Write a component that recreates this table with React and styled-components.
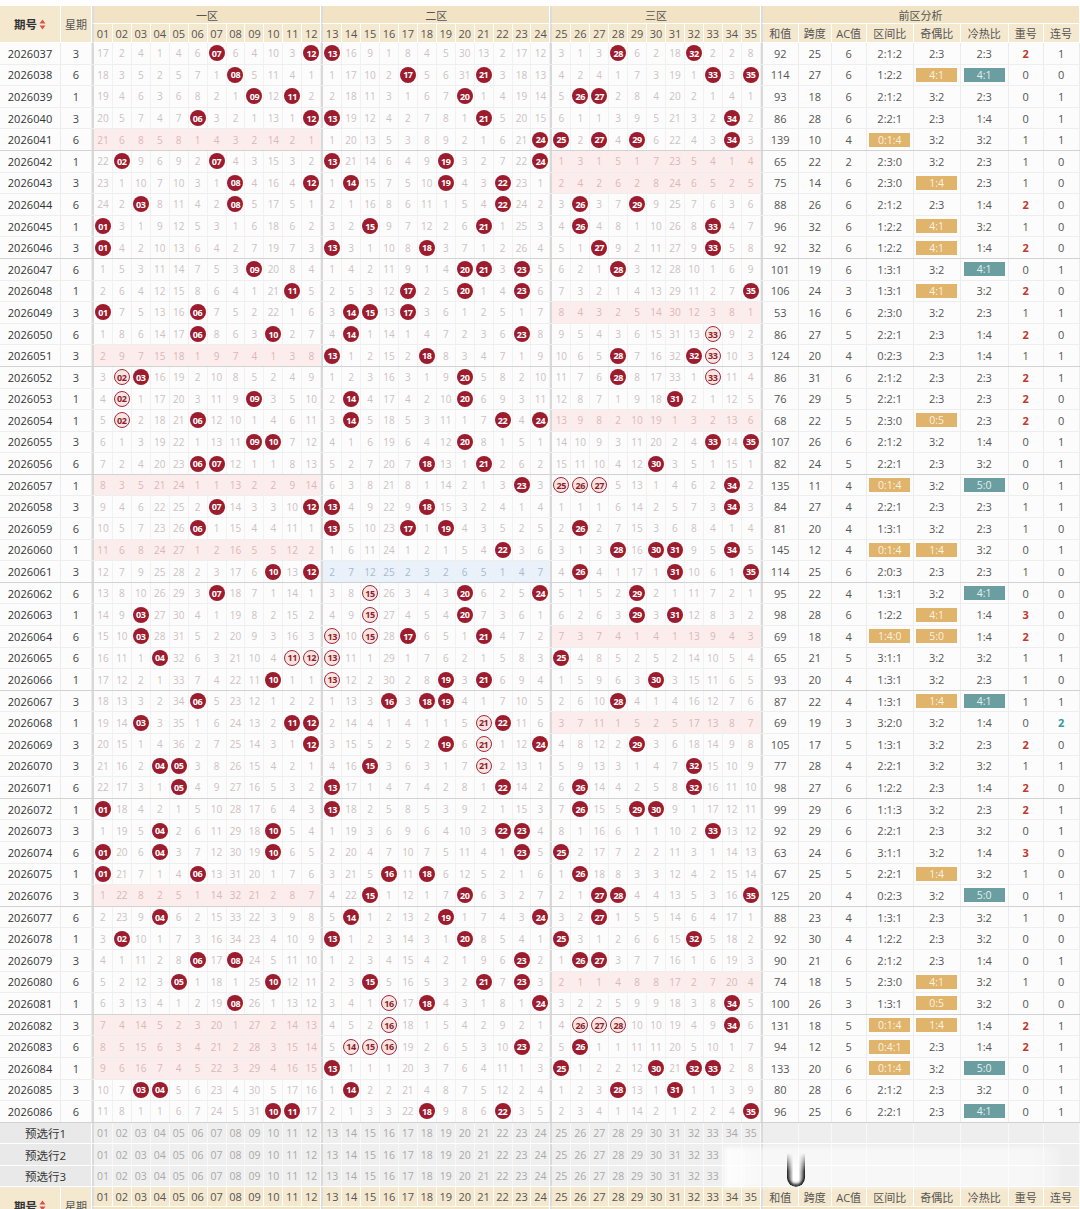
import React from 'react';
import styled, { createGlobalStyle, css } from 'styled-components';

const GlobalStyle = createGlobalStyle`
  *, *::before, *::after { box-sizing: border-box; }
  html, body { margin: 0; padding: 0; background: #fff; }
  body { font-family: "Open Sans", "Noto Sans CJK SC", sans-serif; }
`;

const COLS = `61px 31px 20.9px repeat(11, 18.95px) 20.9px repeat(11, 18.95px) 20.9px repeat(10, 18.95px) 38px 33px 35px 47px 47px 48px 35px 35.9px`;

const DRAWS = [
  ['2026037', 3, [7, 12, 13, 28, 32]],
  ['2026038', 6, [8, 17, 21, 33, 35]],
  ['2026039', 1, [9, 11, 20, 26, 27]],
  ['2026040', 3, [6, 12, 13, 21, 34]],
  ['2026041', 6, [24, 25, 27, 29, 34]],
  ['2026042', 1, [2, 7, 13, 19, 24]],
  ['2026043', 3, [8, 12, 14, 19, 22]],
  ['2026044', 6, [3, 8, 22, 26, 29]],
  ['2026045', 1, [1, 15, 21, 26, 33]],
  ['2026046', 3, [1, 13, 18, 27, 33]],
  ['2026047', 6, [9, 20, 21, 23, 28]],
  ['2026048', 1, [11, 17, 20, 23, 35]],
  ['2026049', 3, [1, 6, 14, 15, 17]],
  ['2026050', 6, [6, 10, 14, 23, 33]],
  ['2026051', 3, [13, 18, 28, 32, 33]],
  ['2026052', 3, [2, 3, 20, 28, 33]],
  ['2026053', 1, [2, 9, 14, 20, 31]],
  ['2026054', 1, [2, 6, 14, 22, 24]],
  ['2026055', 3, [9, 10, 20, 33, 35]],
  ['2026056', 6, [6, 7, 18, 21, 30]],
  ['2026057', 1, [23, 25, 26, 27, 34]],
  ['2026058', 3, [7, 12, 13, 18, 34]],
  ['2026059', 6, [6, 13, 17, 19, 26]],
  ['2026060', 1, [22, 28, 30, 31, 34]],
  ['2026061', 3, [10, 12, 26, 31, 35]],
  ['2026062', 6, [7, 15, 20, 24, 29]],
  ['2026063', 1, [3, 15, 20, 29, 31]],
  ['2026064', 6, [3, 13, 15, 17, 21]],
  ['2026065', 6, [4, 11, 12, 13, 25]],
  ['2026066', 1, [10, 13, 19, 21, 30]],
  ['2026067', 3, [6, 16, 18, 19, 28]],
  ['2026068', 1, [3, 11, 12, 21, 22]],
  ['2026069', 3, [12, 19, 21, 24, 29]],
  ['2026070', 3, [4, 5, 15, 21, 32]],
  ['2026071', 6, [5, 13, 22, 26, 32]],
  ['2026072', 1, [1, 13, 26, 29, 30]],
  ['2026073', 3, [4, 10, 22, 23, 33]],
  ['2026074', 6, [1, 4, 10, 23, 25]],
  ['2026075', 1, [1, 6, 16, 18, 26]],
  ['2026076', 3, [15, 20, 27, 28, 35]],
  ['2026077', 6, [4, 14, 19, 24, 27]],
  ['2026078', 1, [2, 13, 20, 25, 32]],
  ['2026079', 3, [6, 8, 23, 26, 27]],
  ['2026080', 6, [5, 10, 15, 21, 23]],
  ['2026081', 1, [8, 16, 18, 24, 34]],
  ['2026082', 3, [16, 26, 27, 28, 34]],
  ['2026083', 6, [14, 15, 16, 23, 26]],
  ['2026084', 1, [13, 25, 30, 32, 33]],
  ['2026085', 3, [3, 4, 14, 28, 31]],
  ['2026086', 6, [10, 11, 18, 22, 35]],
];

const HOT = [
  '2:3', '4:1', '2:3', '1:4', '3:2',
  '2:3', '2:3', '1:4', '3:2', '1:4',
  '4:1', '3:2', '2:3', '1:4', '1:4',
  '2:3', '2:3', '2:3', '1:4', '3:2',
  '5:0', '2:3', '2:3', '3:2', '2:3',
  '4:1', '1:4', '1:4', '3:2', '2:3',
  '4:1', '1:4', '2:3', '3:2', '1:4',
  '2:3', '3:2', '1:4', '3:2', '5:0',
  '3:2', '3:2', '1:4', '3:2', '3:2',
  '1:4', '1:4', '5:0', '3:2', '4:1',
];

const HOLLOW = {
  '2026050': [33], '2026051': [33], '2026052': [2, 33], '2026053': [2], '2026054': [2],
  '2026057': [25, 26, 27], '2026062': [15], '2026063': [15], '2026064': [13, 15],
  '2026065': [11, 12, 13], '2026066': [13], '2026068': [21], '2026069': [21], '2026070': [21],
  '2026081': [16], '2026082': [16, 26, 27, 28], '2026083': [14, 15, 16],
};

const INIT = [17, 2, 4, 1, 4, 6, 0, 6, 4, 10, 3, 0, 0, 16, 9, 1, 8, 4, 5, 30, 13, 2, 17, 12, 3, 1, 3, 0, 6, 2, 18, 0, 2, 2, 8];

const zoneOf = (n) => (n <= 12 ? 0 : n <= 24 ? 1 : 2);
const pad = (n) => String(n).padStart(2, '0');
const NUMS = Array.from({ length: 35 }, (_, i) => i + 1);
const isZoneStart = (n) => n === 1 || n === 13 || n === 25;

function buildRows() {
  let prevMiss = null;
  let prevBalls = null;
  return DRAWS.map(([id, week, balls], idx) => {
    const set = new Set(balls);
    const miss = prevMiss ? prevMiss.map((v, c) => (set.has(c + 1) ? 0 : v + 1)) : INIT;
    const zc = [0, 0, 0];
    balls.forEach((b) => { zc[zoneOf(b)] += 1; });
    const odd = balls.filter((b) => b % 2 === 1).length;
    const diffs = new Set();
    for (let a = 0; a < balls.length; a++) for (let b = a + 1; b < balls.length; b++) diffs.add(balls[b] - balls[a]);
    const rep = prevBalls ? balls.filter((b) => prevBalls.includes(b)).length : 2;
    let lian = 0;
    for (let k = 0; k < balls.length - 1; k++) {
      if (balls[k + 1] - balls[k] === 1 && !(k > 0 && balls[k] - balls[k - 1] === 1)) lian += 1;
    }
    prevMiss = miss;
    prevBalls = balls;
    return {
      id, week, balls, set, miss, zc,
      hollow: new Set(HOLLOW[id] || []),
      sum: balls.reduce((s, b) => s + b, 0),
      span: balls[4] - balls[0],
      ac: diffs.size - 4,
      zoneRatio: zc.join(':'),
      zoneHot: Math.max(...zc) >= 4,
      oe: `${odd}:${5 - odd}`,
      oeHot: odd >= 4 || odd <= 1,
      hot: HOT[idx],
      hotHot: Number(HOT[idx][0]) >= 4,
      rep, lian,
    };
  });
}

const ROWS = buildRows();

/* ---------- styled parts ---------- */

const Page = styled.div`
  position: relative;
  width: 1080px;
  height: 1209px;
  overflow: hidden;
  padding-top: 6px;
  background: #fff;
`;

const HeadGrid = styled.div`
  display: grid;
  grid-template-columns: ${COLS};
  grid-template-rows: ${(p) => p.$rows};
`;

const HeadCell = styled.div`
  grid-column: ${(p) => p.$col};
  grid-row: ${(p) => p.$row};
  display: flex;
  align-items: center;
  justify-content: center;
  gap: 2px;
  background: ${(p) => (p.$top ? '#f1e3c3' : '#f4e8cf')};
  border-right: 1px solid #fff;
  border-bottom: 1px solid #fff;
  ${(p) => p.$zoneStart && css`border-left: 2px solid #dcdcdc;`}
  color: ${(p) => (p.$strong ? '#333' : '#555')};
  font-size: ${(p) => (p.$strong ? '11.5px' : '11px')};
  font-weight: ${(p) => (p.$strong ? 600 : 400)};
  white-space: nowrap;
  overflow: hidden;
`;

const Row = styled.div`
  display: grid;
  grid-template-columns: ${COLS};
  height: 21.6px;
  border-bottom: 1px solid ${(p) => (p.$groupEnd ? '#d2d2d2' : '#eeeeee')};
  background: #fcfcfc;
`;

const IdCell = styled.div`
  display: flex;
  align-items: center;
  justify-content: center;
  font-size: 11px;
  color: #333;
  border-right: 1px solid #ececec;
  letter-spacing: 0.1px;
`;

const WeekCell = styled(IdCell)`
  color: #444;
`;

const shadeBg = { pink: '#fcecec', blue: '#e9f1fb' };
const shadeFg = { pink: '#d8b9b9', blue: '#aab9cc' };

const NumCell = styled.div`
  display: flex;
  align-items: center;
  justify-content: center;
  font-size: 10px;
  color: ${(p) => (p.$shade ? shadeFg[p.$shade] : '#cdc2c2')};
  background: ${(p) => (p.$shade ? shadeBg[p.$shade] : 'transparent')};
  border-right: 1px solid #f1f1f1;
  ${(p) => p.$zoneStart && css`border-left: 2px solid #d9d9d9;`}
  overflow: visible;
`;

const Ball = styled.span`
  flex: none;
  width: 16px;
  height: 16px;
  border-radius: 50%;
  display: flex;
  align-items: center;
  justify-content: center;
  font-size: 9px;
  font-weight: 700;
  letter-spacing: -0.4px;
  ${(p) => (p.$hollow
    ? css`
      background: #f8e5e2;
      border: 1.3px solid #a3283a;
      color: #8c1e2d;
    `
    : css`
      background: #9c1c2e;
      color: #fff;
    `)}
`;

const AnaCell = styled.div`
  display: flex;
  align-items: center;
  justify-content: center;
  font-size: 11px;
  color: ${(p) => p.$color || '#555'};
  font-weight: ${(p) => (p.$color ? 700 : 400)};
  border-right: 1px solid #ececec;
  ${(p) => p.$zoneStart && css`border-left: 2px solid #d9d9d9;`}
`;

const Badge = styled.span`
  width: 41px;
  height: 14px;
  display: flex;
  align-items: center;
  justify-content: center;
  font-size: 10.5px;
  color: rgba(255, 255, 255, 0.85);
  background: ${(p) => (p.$kind === 'teal' ? '#6b9ea0' : '#e0b46a')};
`;

const PreRow = styled.div`
  display: grid;
  grid-template-columns: ${COLS};
  height: 21.6px;
  border-bottom: 1px solid #fff;
`;

const PreLabel = styled.div`
  grid-column: 1 / 3;
  display: flex;
  align-items: center;
  justify-content: center;
  background: #e9e9e9;
  color: #333;
  font-size: 11.5px;
  border-right: 1px solid #fff;
`;

const PreNum = styled.div`
  display: flex;
  align-items: center;
  justify-content: center;
  background: #efefef;
  color: #a9a9a9;
  font-size: 10.5px;
  border-right: 1px solid #f8f8f8;
  ${(p) => p.$zoneStart && css`border-left: 2px solid #dadada;`}
`;

const PreBlank = styled.div`
  background: #eeeeee;
  border-right: 1px solid #f8f8f8;
  ${(p) => p.$zoneStart && css`border-left: 2px solid #dadada;`}
`;

const Watermark = styled.div`
  position: absolute;
  left: 724px;
  top: 1147px;
  width: 336px;
  height: 41px;
  background: linear-gradient(to right, rgba(255, 255, 255, 0.9), rgba(255, 255, 255, 0.55) 12%, rgba(255, 255, 255, 0.55) 92%, rgba(255, 255, 255, 0.2));
  filter: blur(2px);
  pointer-events: none;
`;

const WatermarkMark = styled.div`
  position: absolute;
  left: 787px;
  top: 1153px;
  width: 18px;
  height: 34px;
  border-radius: 0 0 9px 9px;
  background:
    linear-gradient(to right, rgba(10, 10, 10, 0.85), rgba(255, 255, 255, 0.9) 35%, rgba(255, 255, 255, 0.9) 65%, rgba(10, 10, 10, 0.85));
  box-shadow: inset 0 -3px 3px rgba(0, 0, 0, 0.8);
  -webkit-mask-image: linear-gradient(to bottom, transparent, #000 55%);
  mask-image: linear-gradient(to bottom, transparent, #000 55%);
  pointer-events: none;
`;

const SortIcon = () => (
  <svg width="7" height="11" viewBox="0 0 7 11">
    <path d="M3.5 0.5 L6.5 4.5 L0.5 4.5 Z" fill="#d9534f" />
    <path d="M3.5 10.5 L6.5 6.5 L0.5 6.5 Z" fill="#d9534f" />
  </svg>
);

const ANA_LABELS = ['和值', '跨度', 'AC值', '区间比', '奇偶比', '冷热比', '重号', '连号'];
const ZONES = [
  { label: '一区', col: '3 / 15' },
  { label: '二区', col: '15 / 27' },
  { label: '三区', col: '27 / 38' },
  { label: '前区分析', col: '38 / 46' },
];

function Header({ footer }) {
  const zoneRow = footer ? '2' : '1';
  const numRow = footer ? '1' : '2';
  return (
    <HeadGrid $rows={footer ? '20px 18px' : '18px 19px'}>
      <HeadCell $col="1" $row="1 / 3" $strong>期号<SortIcon /></HeadCell>
      <HeadCell $col="2" $row="1 / 3">星期</HeadCell>
      {ZONES.map((z) => (
        <HeadCell key={z.label} $col={z.col} $row={zoneRow} $top $zoneStart>{z.label}</HeadCell>
      ))}
      {NUMS.map((n) => (
        <HeadCell key={n} $col={String(n + 2)} $row={numRow} $zoneStart={isZoneStart(n)}>{pad(n)}</HeadCell>
      ))}
      {ANA_LABELS.map((l, i) => (
        <HeadCell key={l} $col={String(38 + i)} $row={numRow} $zoneStart={i === 0}>{l}</HeadCell>
      ))}
    </HeadGrid>
  );
}

function DataRow({ r, groupEnd }) {
  return (
    <Row $groupEnd={groupEnd}>
      <IdCell>{r.id}</IdCell>
      <WeekCell>{r.week}</WeekCell>
      {NUMS.map((n) => {
        const z = zoneOf(n);
        const shade = r.zc[z] === 0 ? (z === 1 ? 'blue' : 'pink') : null;
        return (
          <NumCell key={n} $zoneStart={isZoneStart(n)} $shade={shade}>
            {r.set.has(n) ? <Ball $hollow={r.hollow.has(n)}>{pad(n)}</Ball> : r.miss[n - 1]}
          </NumCell>
        );
      })}
      <AnaCell $zoneStart>{r.sum}</AnaCell>
      <AnaCell>{r.span}</AnaCell>
      <AnaCell>{r.ac}</AnaCell>
      <AnaCell>{r.zoneHot ? <Badge>{r.zoneRatio}</Badge> : r.zoneRatio}</AnaCell>
      <AnaCell>{r.oeHot ? <Badge>{r.oe}</Badge> : r.oe}</AnaCell>
      <AnaCell>{r.hotHot ? <Badge $kind="teal">{r.hot}</Badge> : r.hot}</AnaCell>
      <AnaCell $color={r.rep >= 2 ? '#c0392b' : undefined}>{r.rep}</AnaCell>
      <AnaCell $color={r.lian >= 2 ? '#2f9a9c' : undefined}>{r.lian}</AnaCell>
    </Row>
  );
}

function PreselectRow({ label, upTo }) {
  return (
    <PreRow>
      <PreLabel>{label}</PreLabel>
      {NUMS.map((n) => (n <= upTo
        ? <PreNum key={n} $zoneStart={isZoneStart(n)}>{pad(n)}</PreNum>
        : <PreBlank key={n} $zoneStart={isZoneStart(n)} />))}
      {ANA_LABELS.map((l, i) => <PreBlank key={l} $zoneStart={i === 0} />)}
    </PreRow>
  );
}

export default function App() {
  return (
    <Page>
      <GlobalStyle />
      <Header />
      {ROWS.map((r, i) => <DataRow key={r.id} r={r} groupEnd={(i + 1) % 5 === 0} />)}
      <PreselectRow label="预选行1" upTo={35} />
      <PreselectRow label="预选行2" upTo={33} />
      <PreselectRow label="预选行3" upTo={33} />
      <Header footer />
      <Watermark />
      <WatermarkMark />
    </Page>
  );
}
